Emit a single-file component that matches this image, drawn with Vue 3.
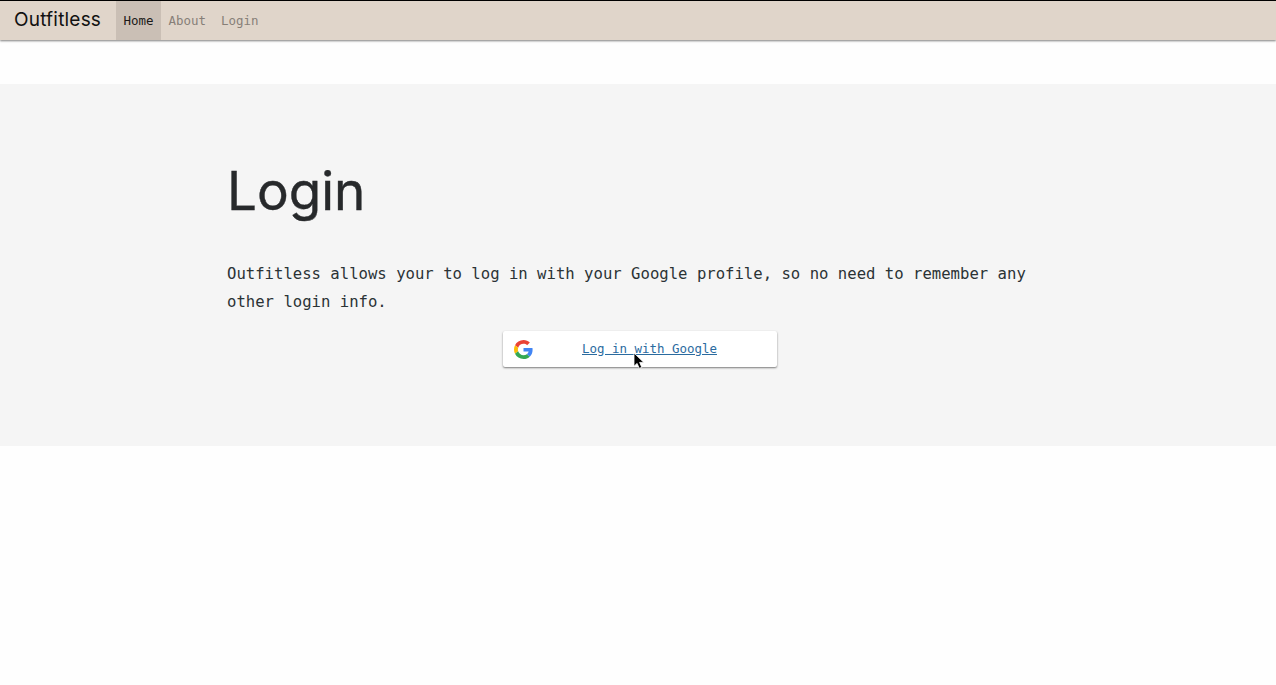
<script setup>
const links = [
  { label: 'Home', active: true },
  { label: 'About', active: false },
  { label: 'Login', active: false },
]
</script>

<template>
  <div class="page">
    <nav class="navbar">
      <span class="brand">Outfitless</span>
      <a v-for="l in links" :key="l.label" class="nav-link" :class="{ active: l.active }">{{ l.label }}</a>
    </nav>
    <main class="panel">
      <div class="content">
        <h1>Login</h1>
        <p>Outfitless allows your to log in with your Google profile, so no need to remember any<br />other login info.</p>
        <div class="button">
          <svg class="google" viewBox="0 0 48 48">
            <path fill="#EA4335" d="M24 9.5c3.54 0 6.71 1.22 9.21 3.6l6.85-6.85C35.9 2.38 30.47 0 24 0 14.62 0 6.51 5.38 2.56 13.22l7.98 6.19C12.43 13.72 17.74 9.5 24 9.5z" />
            <path fill="#4285F4" d="M46.98 24.55c0-1.57-.15-3.09-.38-4.55H24v9.02h12.94c-.58 2.96-2.26 5.48-4.78 7.18l7.73 6c4.51-4.18 7.09-10.36 7.09-17.65z" />
            <path fill="#FBBC05" d="M10.53 28.59c-.48-1.45-.76-2.99-.76-4.59s.27-3.14.76-4.59l-7.98-6.19C.92 16.46 0 20.12 0 24c0 3.88.92 7.54 2.56 10.78l7.97-6.19z" />
            <path fill="#34A853" d="M24 48c6.48 0 11.93-2.13 15.89-5.81l-7.73-6c-2.15 1.45-4.92 2.3-8.16 2.3-6.26 0-11.57-4.22-13.47-9.91l-7.98 6.19C6.51 42.62 14.62 48 24 48z" />
          </svg>
          <a class="label">Log in with Google</a>
          <svg class="cursor" viewBox="0 0 12 18">
            <path d="M1 1V14.2L4.1 11.4L6.3 16.4L8.8 15.3L6.6 10.4H10.8Z" fill="#000" stroke="#fff" stroke-width="0.8" />
          </svg>
        </div>
      </div>
    </main>
  </div>
</template>

<style>
body {
  background: #fefefe;
}
</style>

<style scoped>
.page {
  font-family: "DejaVu Sans Mono", monospace;
  color: #2b3335;
}
.navbar {
  box-sizing: border-box;
  display: flex;
  height: 40px;
  padding-left: 14px;
  border-top: 1px solid #000;
  background: #e0d5ca;
  box-shadow: 0 1px 2px rgba(0, 0, 0, 0.5);
}
.brand {
  width: 102px;
  font: 19px/37px Inter, sans-serif;
  letter-spacing: 0.2px;
  color: #111;
}
.nav-link {
  padding: 0 7.5px;
  font-size: 12.46px;
  line-height: 39px;
  color: #877f78;
}
.nav-link.active {
  background: #cabfb5;
  color: #1b1917;
}
.panel {
  box-sizing: border-box;
  height: 362px;
  margin-top: 44px;
  padding-top: 72px;
  background: #f5f5f5;
}
.content {
  width: 826px;
  margin-left: 227px;
}
h1 {
  margin: 0;
  font: 400 53px/70px Inter, sans-serif;
  letter-spacing: 0;
  -webkit-text-stroke: 0.4px #27292b;
  color: #27292b;
}
p {
  margin: 34px 0 0;
  font-size: 15.61px;
  line-height: 28px;
  white-space: nowrap;
}
.button {
  position: relative;
  box-sizing: border-box;
  display: flex;
  align-items: center;
  width: 274px;
  height: 36px;
  margin: 15px 0 0 276px;
  padding-left: 11px;
  border-radius: 2px;
  background: #fff;
  box-shadow: 0 1px 2px rgba(0, 0, 0, 0.5);
}
.google {
  width: 19px;
  height: 19px;
  margin-top: 1px;
}
.label {
  margin: -1px 0 0 49px;
  font-size: 12.46px;
  line-height: 18px;
  color: #2b6b9f;
  text-decoration: underline;
}
.cursor {
  position: absolute;
  left: 130px;
  top: 21px;
  width: 12px;
  height: 18px;
}
</style>
